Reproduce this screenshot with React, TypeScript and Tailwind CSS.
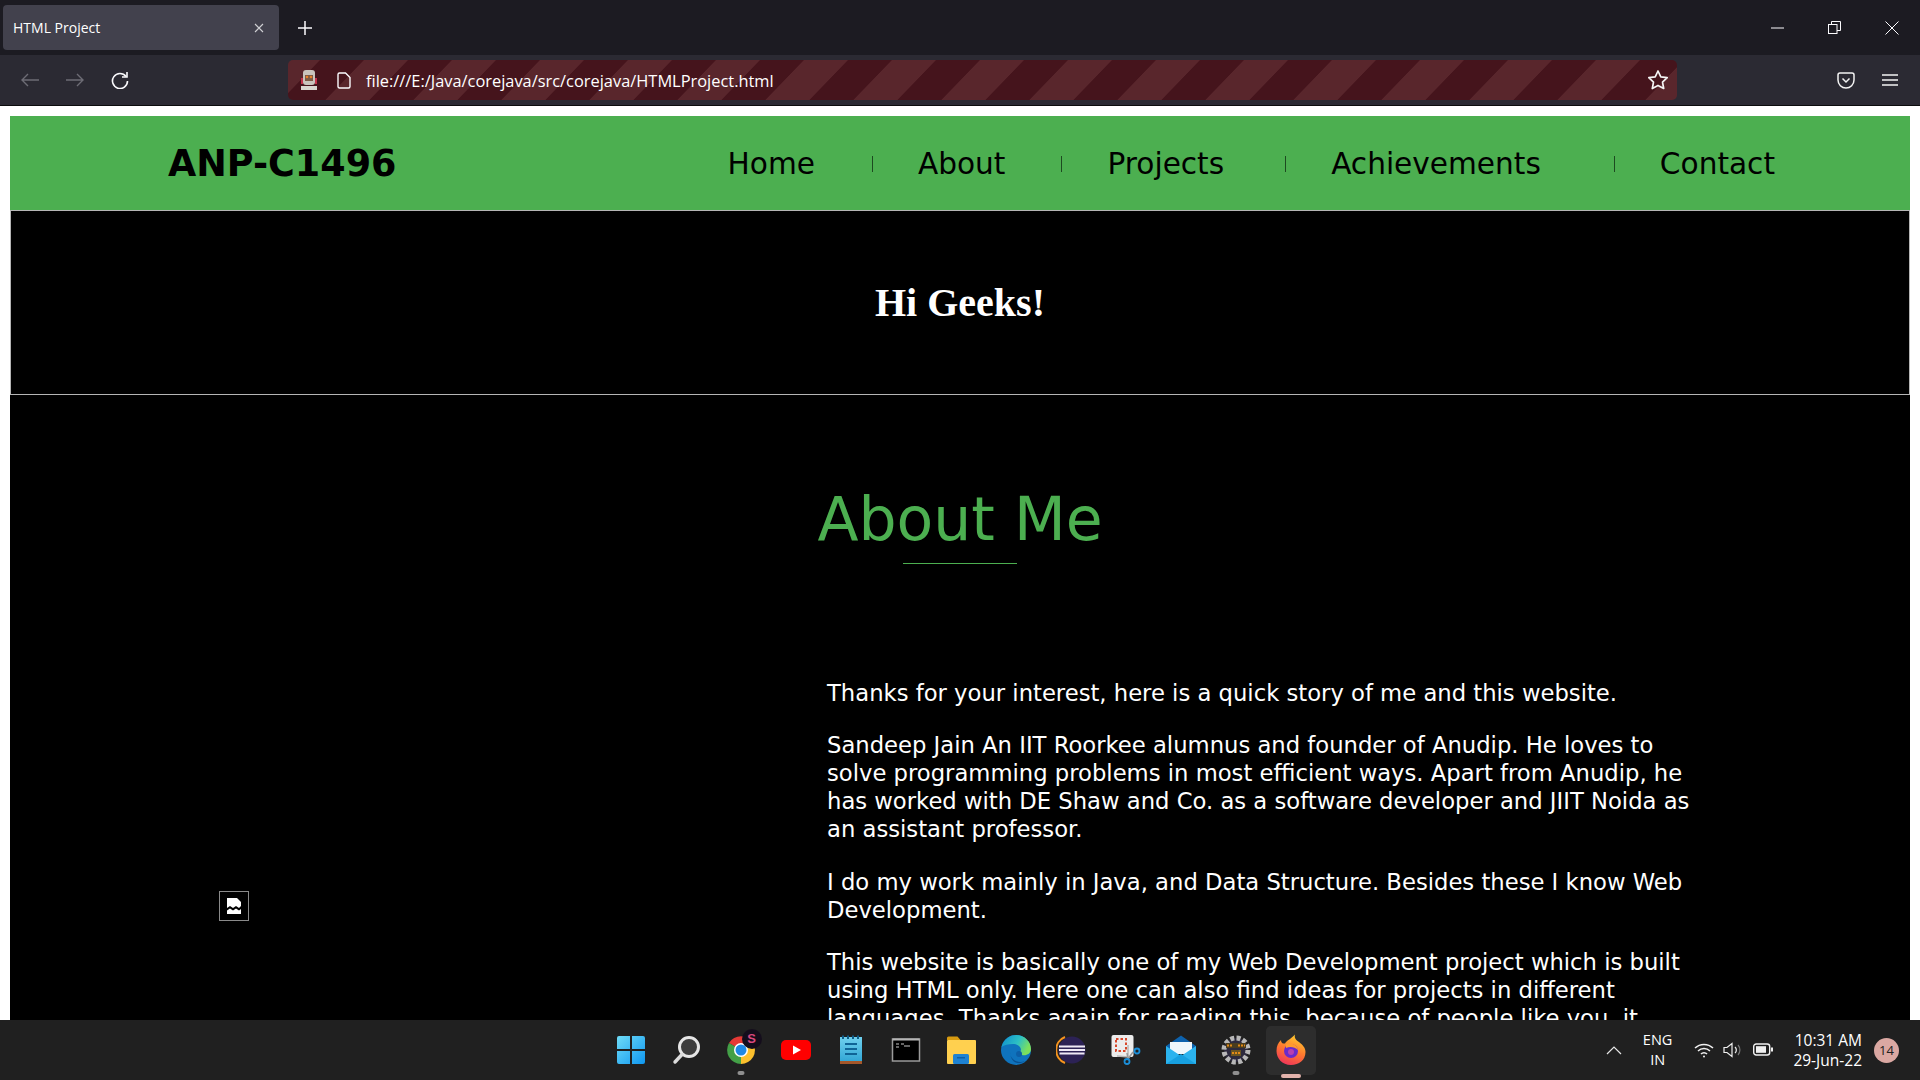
import type { ReactNode } from "react";

const Stripes = () => (
  <svg className="absolute inset-0 h-full w-full" aria-hidden="true">
    <defs>
      <pattern id="stripes" width="88" height="40" patternUnits="userSpaceOnUse" patternTransform="translate(76 0) skewX(-44)">
        <rect width="88" height="40" fill="#45141c" />
        <rect width="44" height="40" fill="#59262c" />
      </pattern>
    </defs>
    <rect width="100%" height="100%" fill="url(#stripes)" />
  </svg>
);

const Lock = () => (
  <svg width="18" height="22" viewBox="0 0 18 22" aria-hidden="true">
    <rect x="3" y="1" width="12" height="15" rx="3" fill="#c9c4bd" />
    <rect x="1" y="9" width="2" height="6" fill="#c2334a" />
    <rect x="15" y="9" width="2" height="6" fill="#c2334a" />
    <rect x="5" y="6" width="8" height="6" fill="#7b5a45" />
    <circle cx="7" cy="8" r="1.3" fill="#e4802b" />
    <circle cx="11" cy="8" r="1.3" fill="#e4802b" />
    <rect x="1" y="17" width="16" height="4" fill="#d9d6d0" />
  </svg>
);

const TaskIcon = ({ children, dot }: { children: ReactNode; dot?: boolean }) => (
  <div className="relative flex h-full w-[55px] items-center justify-center">
    {children}
    {dot && <div className="absolute bottom-[5px] left-1/2 h-[4px] w-[7px] -translate-x-1/2 rounded-full bg-[#8f8f8f]" />}
  </div>
);

const Taskbar = () => (
  <footer className="relative z-10 flex h-[60px] shrink-0 items-center bg-[#202020] text-white">
    <div className="ml-[603px] flex h-full items-center">
      {/* Windows */}
      <TaskIcon>
        <svg width="30" height="30" viewBox="0 0 30 30">
          <defs>
            <linearGradient id="win" x1="0" y1="0" x2="1" y2="1">
              <stop offset="0" stopColor="#6fdcf7" />
              <stop offset="1" stopColor="#0f97f0" />
            </linearGradient>
          </defs>
          <path d="M1 3a2 2 0 0 1 2-2h11v13H1zM16 1h11a2 2 0 0 1 2 2v11H16zM1 16h13v13H3a2 2 0 0 1-2-2zM16 16h13v11a2 2 0 0 1-2 2H16z" fill="url(#win)" />
        </svg>
      </TaskIcon>
      {/* Search */}
      <TaskIcon>
        <svg width="30" height="30" viewBox="0 0 30 30" fill="none">
          <circle cx="18" cy="12" r="9.5" fill="#3d3d3d" stroke="#e6e6e6" strokeWidth="3" />
          <path d="M11 19.5 L4 27" stroke="#dcdcdc" strokeWidth="3.4" strokeLinecap="round" />
        </svg>
      </TaskIcon>
      {/* Chrome with profile badge */}
      <TaskIcon dot>
        <div className="relative">
          <svg width="30" height="30" viewBox="0 0 30 30">
            <path d="M15 15 L3 8 A14 14 0 0 1 27.1 8 Z" fill="#e53935" />
            <path d="M15 15 L27.1 8 A14 14 0 0 1 15 29 Z" fill="#fbc02d" />
            <path d="M15 15 L15 29 A14 14 0 0 1 3 8 Z" fill="#43a047" />
            <circle cx="15" cy="15" r="7" fill="#fff" />
            <circle cx="15" cy="15" r="5.5" fill="#1e88e5" />
          </svg>
          <div className="absolute -right-[6px] -top-[6px] flex size-[20px] items-center justify-center rounded-full bg-[#140d1c] font-['Liberation_Sans',sans-serif] text-[13px] font-bold text-[#d8487f]">S</div>
        </div>
      </TaskIcon>
      {/* YouTube */}
      <TaskIcon>
        <svg width="30" height="30" viewBox="0 0 30 30">
          <rect y="5" width="30" height="20" rx="5" fill="#f00" />
          <polygon points="12,10.5 20,15 12,19.5" fill="#fff" />
        </svg>
      </TaskIcon>
      {/* Notepad */}
      <TaskIcon>
        <svg width="30" height="30" viewBox="0 0 30 30">
          <defs>
            <linearGradient id="note" x1="0" y1="0" x2="0" y2="1">
              <stop offset="0" stopColor="#6fd0ee" />
              <stop offset="1" stopColor="#2ea4d4" />
            </linearGradient>
          </defs>
          <rect x="4" y="2" width="22" height="26" fill="url(#note)" />
          <rect x="4" y="26" width="22" height="3" fill="#a4572a" />
          <path d="M7 0.5v3.5M12 0.5v3.5M17 0.5v3.5M22 0.5v3.5" stroke="#0f5c88" strokeWidth="2" />
          <path d="M9 9h12M9 14h12M9 19h12" stroke="#0f6496" strokeWidth="2" />
        </svg>
      </TaskIcon>
      {/* Terminal */}
      <TaskIcon>
        <svg width="30" height="30" viewBox="0 0 30 30">
          <rect x="1.5" y="4" width="27" height="22" fill="#000" stroke="#9b9b9b" strokeWidth="1.5" />
          <rect x="1.5" y="3.5" width="27" height="2" fill="#b5b5b5" />
          <path d="M5 9h3M5 12h3M10 9h3M13 11h6" stroke="#c8c8c8" strokeWidth="1" />
        </svg>
      </TaskIcon>
      {/* Explorer */}
      <TaskIcon>
        <svg width="30" height="30" viewBox="0 0 30 30">
          <path d="M1 3a1.5 1.5 0 0 1 1.5-1.5h9l3 3.5h-13.5z" fill="#d89b10" />
          <rect x="1" y="5" width="29" height="24" rx="1" fill="#ffd04f" />
          <rect x="7" y="19" width="16" height="10" rx="1.5" fill="#1e82d2" />
          <rect x="11" y="22" width="8" height="1.5" fill="#0d5fa6" />
        </svg>
      </TaskIcon>
      {/* Edge */}
      <TaskIcon>
        <svg width="30" height="30" viewBox="0 0 30 30">
          <defs>
            <linearGradient id="edge" x1="0" y1="0" x2="1" y2="0.4">
              <stop offset="0" stopColor="#0c8ccf" />
              <stop offset="0.6" stopColor="#2dc0c4" />
              <stop offset="1" stopColor="#7ce05c" />
            </linearGradient>
          </defs>
          <circle cx="15" cy="15" r="15" fill="#0f73bd" />
          <path d="M0.5 12 C3 3 10 0 15 0 C24 0 30 7 30 14 C30 19 25 21 21 20 C18 19 19 17 20 15 C20 11 16 9 12 9 C7 9 3 10 0.5 12Z" fill="url(#edge)" />
          <path d="M9 17 C9 24 16 29 24 26 C18 30 10 29 9 17Z" fill="#0a4f8f" />
          <circle cx="18" cy="19" r="3" fill="#0d5ea6" />
        </svg>
      </TaskIcon>
      {/* Eclipse */}
      <TaskIcon>
        <svg width="30" height="30" viewBox="0 0 30 30">
          <circle cx="16" cy="15" r="13.5" fill="#2c2255" />
          <path d="M9 2 A14 14 0 0 0 9 28" fill="none" stroke="#f7941e" strokeWidth="2" />
          <path d="M3 11.5h26M3 15h26M3.5 18.5h25" stroke="#efeaf6" strokeWidth="1.8" />
        </svg>
      </TaskIcon>
      {/* Snipping tool */}
      <TaskIcon>
        <svg width="30" height="30" viewBox="0 0 30 30" fill="none">
          <rect x="0.5" y="0" width="22" height="22" rx="2" fill="#ececec" />
          <rect x="5" y="4" width="10" height="12" stroke="#d8472b" strokeWidth="2" strokeDasharray="2.5 2" />
          <path d="M17 10 L17 22 L6 21" stroke="#b8b8b8" strokeWidth="1.5" />
          <path d="M16 18 L17 24 M22 17 L17 24" stroke="#9a9a9a" strokeWidth="1.5" />
          <circle cx="16" cy="26.5" r="2.5" stroke="#1b8ed8" strokeWidth="1.8" />
          <circle cx="26" cy="16" r="2.5" stroke="#1b8ed8" strokeWidth="1.8" />
        </svg>
      </TaskIcon>
      {/* Mail */}
      <TaskIcon>
        <svg width="30" height="30" viewBox="0 0 30 30">
          <path d="M15 0.5 L30 11 V15 H0 V11Z" fill="#0d62ad" />
          <path d="M4 7h22v12h-22z" fill="#eef7fc" />
          <path d="M0 11 L15 21 L30 11 V29 H0Z" fill="#2bb3ee" />
          <path d="M0 29 L15 19 L30 29Z" fill="#17a0e0" />
        </svg>
      </TaskIcon>
      {/* Java EE IDE */}
      <TaskIcon dot>
        <svg width="30" height="30" viewBox="0 0 30 30">
          <circle cx="15" cy="15" r="12" fill="#2d2a3e" stroke="#b8b8b8" strokeWidth="5" strokeDasharray="4 2.3" />
          <rect x="5" y="8" width="20" height="5" fill="#4a3c1e" />
          <rect x="10" y="15" width="10" height="6" fill="#6a5421" />
          <path d="M6 10.5h6M17 10.5h7M11 18h8" stroke="#e38a17" strokeWidth="2" strokeDasharray="2 1" />
        </svg>
      </TaskIcon>
      {/* Firefox, active */}
      <TaskIcon>
        <div className="flex h-[49px] w-[50px] items-center justify-center rounded-[5px] bg-[#2d2d2d]">
          <svg width="30" height="32" viewBox="0 0 30 32">
            <defs>
              <linearGradient id="fox" x1="0.7" y1="0" x2="0.3" y2="1">
                <stop offset="0" stopColor="#ffd02e" />
                <stop offset="0.5" stopColor="#ff7a2f" />
                <stop offset="1" stopColor="#f0345a" />
              </linearGradient>
            </defs>
            <path d="M15 31 C6 31 0.5 24 0.5 17 C0.5 12 2 9 5 6 C5 9 7 10 9 9.5 C11 6 15 5 19 0.5 C18 4 20 6 23 8 C27 11 29.5 14 29.5 18 C29.5 26 23 31 15 31Z" fill="url(#fox)" />
            <circle cx="15" cy="17" r="7" fill="#6a2bc9" />
            <path d="M10 10 C15 8 21 11 22 16 C19 13 14 12 10 14Z" fill="#ff9a2e" />
            <circle cx="15" cy="18" r="3" fill="#b83fb0" />
          </svg>
        </div>
        <div className="absolute bottom-[2px] left-1/2 h-[4px] w-[20px] -translate-x-1/2 rounded-full bg-[#e3b3ac]" />
      </TaskIcon>
    </div>
    <div className="ml-auto flex h-full items-center font-['Open_Sans',sans-serif] text-[15.5px] leading-[20px]">
      <svg width="16" height="10" viewBox="0 0 16 10" fill="none" stroke="#e6e6e6" strokeWidth="1.2"><path d="M1 9 L8 2 L15 9" /></svg>
      <div className="ml-[21px] text-center text-[14.5px]">
        <div>ENG</div>
        <div>IN</div>
      </div>
      <svg className="ml-[22px]" width="20" height="16" viewBox="0 0 20 16" fill="none" stroke="#f0f0f0" strokeWidth="1.5"><path d="M1 6a13 13 0 0 1 18 0M4 9a8.5 8.5 0 0 1 12 0M7 12a4 4 0 0 1 6 0" /><circle cx="10" cy="14.5" r="1" fill="#f0f0f0" stroke="none" /></svg>
      <svg className="ml-[9px]" width="20" height="16" viewBox="0 0 20 16" fill="none" stroke="#f0f0f0" strokeWidth="1.2"><path d="M1 5.5h3L9 1.5v13L4 10.5H1z" /><path d="M12 5a4 4 0 0 1 0 6" /><path d="M15 3a7.5 7.5 0 0 1 0 10" stroke="#777" /></svg>
      <svg className="ml-[10px]" width="20" height="14" viewBox="0 0 20 14" fill="none"><rect x="0.7" y="1" width="16" height="11" rx="2.5" stroke="#f0f0f0" strokeWidth="1.4" /><rect x="3" y="3.2" width="10" height="6.6" fill="#f0f0f0" /><rect x="18" y="4.5" width="2" height="4" fill="#f0f0f0" /></svg>
      <div className="ml-[20px] text-right">
        <div>10:31 AM</div>
        <div>29-Jun-22</div>
      </div>
      <div className="ml-[12px] mr-[21px] flex size-[25px] items-center justify-center rounded-full bg-[#dba8a2] text-[13px] text-[#202020]">14</div>
    </div>
  </footer>
);

const NAV = [
  { label: "Home", sep: "ml-[57px]" },
  { label: "About", sep: "ml-[56px]" },
  { label: "Projects", sep: "ml-[61px]" },
  { label: "Achievements", sep: "ml-[73px]" },
];

export default function App() {
  return (
    <div className="flex h-screen flex-col overflow-hidden bg-white font-['DejaVu_Sans',sans-serif]">
      {/* Tab strip */}
      <div className="flex h-[55px] shrink-0 items-center bg-[#1c1b22] font-['Open_Sans',sans-serif] text-white">
        <div className="ml-[3px] flex h-[45px] w-[276px] items-center justify-between rounded-[4px] bg-[#42414d] pl-[10px] pr-[15px] text-[14px]">
          <span>HTML Project</span>
          <svg width="10" height="10" viewBox="0 0 10 10" stroke="#d0d0d4" strokeWidth="1.1"><path d="M1 1l8 8M9 1l-8 8" /></svg>
        </div>
        <svg className="ml-[18px]" width="16" height="16" viewBox="0 0 16 16" stroke="#fbfbfe" strokeWidth="1.5"><path d="M8 1v14M1 8h14" /></svg>
        <div className="ml-auto flex items-center">
          <svg width="14" height="2" viewBox="0 0 14 2" stroke="#fbfbfe"><path d="M0 1h13" /></svg>
          <svg className="ml-[43px]" width="13" height="13" viewBox="0 0 13 13" fill="none" stroke="#fbfbfe" strokeWidth="1"><rect x="0.5" y="3.5" width="8.5" height="9" /><path d="M3.5 3.5V0.5H12.5V9.5H9" /></svg>
          <svg className="ml-[44px] mr-[21px]" width="14" height="14" viewBox="0 0 14 14" stroke="#fbfbfe" strokeWidth="1"><path d="M0.5 0.5l13 13M13.5 0.5l-13 13" /></svg>
        </div>
      </div>

      {/* Toolbar */}
      <div className="flex h-[51px] shrink-0 items-center border-b border-[#0c0c0d] bg-[#2b2a33] text-white">
        <svg className="ml-[20px]" width="20" height="16" viewBox="0 0 20 16" fill="none" stroke="#6d6c75" strokeWidth="1.4"><path d="M19 8H2M8 2L2 8l6 6" /></svg>
        <svg className="ml-[25px]" width="20" height="16" viewBox="0 0 20 16" fill="none" stroke="#6d6c75" strokeWidth="1.4"><path d="M1 8h17M12 2l6 6-6 6" /></svg>
        <svg className="ml-[26px]" width="18" height="18" viewBox="0 0 18 18" fill="none" stroke="#fbfbfe" strokeWidth="1.6"><path d="M15 5.5A7.5 7.5 0 1 0 16.5 10" /><path d="M16 1v5h-5" /></svg>
        <div className="relative ml-[159px] flex h-[40px] w-[1389px] items-center overflow-hidden rounded-[5px]">
          <Stripes />
          <div className="relative ml-[12px] flex items-center"><Lock /></div>
          <svg className="relative ml-[19px]" width="14" height="17" viewBox="0 0 14 17" fill="none" stroke="#fbfbfe" strokeWidth="1.4"><path d="M1 2.5A1.5 1.5 0 0 1 2.5 1H8.5L13 5.5V14.5A1.5 1.5 0 0 1 11.5 16H2.5A1.5 1.5 0 0 1 1 14.5Z" /></svg>
          <span className="relative ml-[15px] pt-[2px] font-['Open_Sans',sans-serif] text-[16.4px]">file:///E:/Java/corejava/src/corejava/HTMLProject.html</span>
          <svg className="absolute right-[8px] top-[9px]" width="22" height="22" viewBox="0 0 22 22" fill="none" stroke="#f4f4f4" strokeWidth="1.7" strokeLinejoin="round"><path d="M11 2l2.8 5.9 6.4.8-4.7 4.4 1.2 6.4L11 16.4l-5.7 3.1 1.2-6.4L1.8 8.7l6.4-.8z" /></svg>
        </div>
        <svg className="ml-[160px]" width="18" height="17" viewBox="0 0 18 17" fill="none" stroke="#f4f4f4" strokeWidth="1.5"><path d="M1 3a2 2 0 0 1 2-2h12a2 2 0 0 1 2 2v5a8 8 0 0 1-16 0z" /><path d="M5.5 6.5L9 10l3.5-3.5" /></svg>
        <svg className="ml-[27px]" width="16" height="14" viewBox="0 0 16 14" stroke="#f4f4f4" strokeWidth="1.5"><path d="M0 2h16M0 7h16M0 12h16" /></svg>
      </div>

      {/* Page */}
      <main className="min-h-0 flex-1 overflow-hidden px-[10px] pt-[10px]">
        <header className="flex h-[94px] items-center bg-[#4caf50] text-black">
          <div className="ml-[158px] pt-[3px] text-[36.5px] font-bold">ANP-C1496</div>
          <nav className="ml-auto mr-[135px] flex items-center pt-[2px] text-[29.6px]">
            {NAV.map((item) => (
              <div key={item.label} className="flex items-center">
                <span>{item.label}</span>
                <div className={`${item.sep} mr-[45px] h-[16px] w-px bg-[#1d4a20]`} />
              </div>
            ))}
            <span>Contact</span>
          </nav>
        </header>
        <section className="flex h-[185px] items-center justify-center border border-[#b5b5b5] bg-black font-['Liberation_Serif',serif] text-[40px] font-bold text-white">
          Hi Geeks!
        </section>
        <section className="h-[800px] bg-black text-white">
          <h2 className="pt-[86px] text-center text-[60px] leading-[76px] text-[#4caf50]">About Me</h2>
          <div className="mx-auto mt-[6px] h-px w-[114px] bg-[#4caf50]" />
          <div className="mt-[115px] flex">
            <div className="relative w-[817px] shrink-0">
              <div className="absolute left-[209px] top-[212px] flex size-[30px] items-center justify-center border border-[#8a8a8a]">
                <svg width="16" height="16" viewBox="0 0 16 16"><path d="M1 0h10l4 4v4l-2 2-3-2-3 2-3-2-3 2z" fill="#fff" /><path d="M1 12.5l3-2 3 2 3-2 3 2 2-1.5V16H1z" fill="#fff" /></svg>
              </div>
            </div>
            <div className="w-[890px] text-[22.7px] leading-[28px]">
              <p>Thanks for your interest, here is a quick story of me and this website.</p>
              <p className="mt-[24px]">Sandeep Jain An IIT Roorkee alumnus and founder of Anudip. He loves to solve programming problems in most efficient ways. Apart from Anudip, he has worked with DE Shaw and Co. as a software developer and JIIT Noida as an assistant professor.</p>
              <p className="mt-[25px]">I do my work mainly in Java, and Data Structure. Besides these I know Web Development.</p>
              <p className="mt-[24px]">This website is basically one of my Web Development project which is built using HTML only. Here one can also find ideas for projects in different languages. Thanks again for reading this, because of people like you, it</p>
            </div>
          </div>
        </section>
      </main>
      <Taskbar />
    </div>
  );
}
